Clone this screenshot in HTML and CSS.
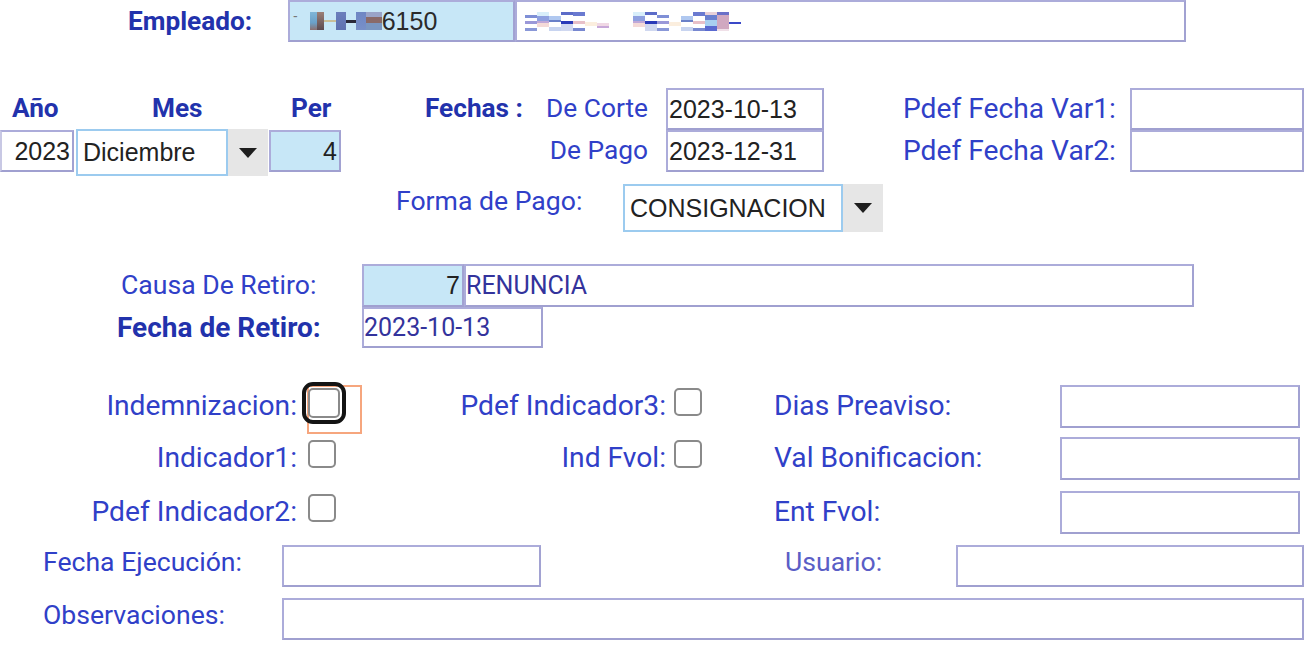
FILE: index.html
```html
<!DOCTYPE html>
<html lang="es">
<head>
<meta charset="utf-8">
<title>Retiro de Empleado</title>
<link rel="stylesheet" href="styles.css">
</head>
<body>
<div class="page">

  <div class="row emp">
    <div class="emp-l"><span class="lbl b">Empleado:</span></div>
    <div class="inp blue emp-code">
      <span class="dash">-</span>
      <span class="rd rd1"></span><span class="rd rd2"></span><span class="rd rd3"></span><span class="rd rd4"></span><span class="rd rd5"></span><span class="rd rd6"></span><span class="rd rd7"></span><span class="code-num">6150</span>
    </div>
    <div class="inp emp-name">
      <span class="nm nm1"></span><span class="nm nm2"></span><span class="nm nm3"></span><span class="nm nm4"></span><span class="nm nm5"></span><span class="nm nm6"></span><span class="nm nm7"></span>
      <span class="nm-gap"></span>
      <span class="nm nm2"></span><span class="nm nm4"></span><span class="nm nm1"></span><span class="nm nm6"></span><span class="nm nm3"></span><span class="nm nm5"></span><span class="nm nm8"></span><span class="nm nm9"></span><span class="nm nm10"></span>
    </div>
  </div>

  <div class="row sec2">
    <div class="blkA">
      <div class="a-labels">
        <div class="a-l1"><span class="lbl b">Año</span></div>
        <div class="a-l2"><span class="lbl b">Mes</span></div>
        <div class="a-l3"><span class="lbl b">Per</span></div>
      </div>
      <div class="a-inputs">
        <div class="inp right anio">2023</div>
        <div class="sel mes">
          <div class="sel-val">Diciembre</div>
          <div class="sel-arr"><svg width="18" height="10" viewBox="0 0 18 10"><polygon points="0,0 18,0 9,10" fill="#1e1e1e"/></svg></div>
        </div>
        <div class="inp blue right per">4</div>
      </div>
    </div>
    <div class="blkB">
      <div class="fechas-l"><span class="lbl b">Fechas :</span></div>
      <div class="b-col">
        <div class="b-row">
          <div class="b-lab"><span class="lbl m">De Corte</span></div>
          <div class="inp date">2023-10-13</div>
        </div>
        <div class="b-row">
          <div class="b-lab"><span class="lbl m">De Pago</span></div>
          <div class="inp date">2023-12-31</div>
        </div>
      </div>
    </div>
    <div class="blkC">
      <div class="c-row">
        <div class="c-lab"><span class="lbl l">Pdef Fecha Var1:</span></div>
        <div class="inp cvar"></div>
      </div>
      <div class="c-row">
        <div class="c-lab"><span class="lbl l">Pdef Fecha Var2:</span></div>
        <div class="inp cvar"></div>
      </div>
    </div>
  </div>

  <div class="row sec3">
    <div class="fp-l"><span class="lbl s">Forma de Pago:</span></div>
    <div class="sel forma">
      <div class="sel-val">CONSIGNACION</div>
      <div class="sel-arr"><svg width="18" height="10" viewBox="0 0 18 10"><polygon points="0,0 18,0 9,10" fill="#1e1e1e"/></svg></div>
    </div>
  </div>

  <div class="row causa">
    <div class="causa-l"><span class="lbl s">Causa De Retiro:</span></div>
    <div class="inp blue right causa-cod">7</div>
    <div class="inp causa-desc rob">RENUNCIA</div>
  </div>
  <div class="row fretiro">
    <div class="fret-l"><span class="lbl b bl2">Fecha de Retiro:</span></div>
    <div class="inp fret-in rob">2023-10-13</div>
  </div>

  <div class="chk-grid">
    <div class="crow crow1">
      <div class="k1"><span class="lbl l">Indemnizacion:</span></div>
      <div class="chk-wrap focus-wrap"><span class="hl"></span><input type="checkbox" class="chk focused"></div>
      <div class="k2"><span class="lbl l">Pdef Indicador3:</span></div>
      <div class="chk-wrap"><input type="checkbox" class="chk"></div>
      <div class="k3"><span class="lbl l">Dias Preaviso:</span></div>
      <div class="inp k3in"></div>
    </div>
    <div class="crow crow2">
      <div class="k1"><span class="lbl l">Indicador1:</span></div>
      <div class="chk-wrap"><input type="checkbox" class="chk"></div>
      <div class="k2"><span class="lbl l">Ind Fvol:</span></div>
      <div class="chk-wrap"><input type="checkbox" class="chk"></div>
      <div class="k3"><span class="lbl l">Val Bonificacion:</span></div>
      <div class="inp k3in"></div>
    </div>
    <div class="crow crow3">
      <div class="k1"><span class="lbl l">Pdef Indicador2:</span></div>
      <div class="chk-wrap"><input type="checkbox" class="chk"></div>
      <div class="k2"></div>
      <div class="chk-wrap"></div>
      <div class="k3"><span class="lbl l">Ent Fvol:</span></div>
      <div class="inp k3in"></div>
    </div>
  </div>

  <div class="row ejec">
    <div class="bl"><span class="lbl s">Fecha Ejecución:</span></div>
    <div class="inp ejec-in"></div>
    <div class="usr-l"><span class="lbl s usr">Usuario:</span></div>
    <div class="inp usr-in"></div>
  </div>
  <div class="row obs">
    <div class="bl"><span class="lbl s">Observaciones:</span></div>
    <div class="inp obs-in"></div>
  </div>

</div>
</body>
</html>
```
FILE: styles.css
```css
* { box-sizing: border-box; }
html, body { margin: 0; padding: 0; }
body {
  width: 1311px;
  height: 649px;
  overflow: hidden;
  background: #ffffff;
  font-family: Roboto, "Liberation Sans", Arial, sans-serif;
}
.page { position: relative; width: 1311px; }

.row { display: flex; }

.lbl {
  font-family: Roboto, "Liberation Sans", sans-serif;
  font-size: 27.5px;
  line-height: 32px;
  color: #3040c8;
  white-space: nowrap;
}
.lbl.s { font-size: 26.6px; }
.lbl.m { font-size: 26.3px; }
.lbl.l { font-size: 28.2px; }
.lbl.b { font-weight: 700; color: #2232ac; font-size: 26.2px; }
.lbl.b.bl2 { font-size: 28px; }
.lbl.usr { color: #5a5ec6; }

.inp {
  height: 42px;
  border: 2px solid #acacda;
  border-bottom-color: #a0a0d0;
  border-right-color: #a2a2d2;
  background: #ffffff;
  display: flex;
  align-items: center;
  padding: 0 2px;
  font-family: "Liberation Sans", Arial, sans-serif;
  font-size: 25px;
  color: #222222;
  white-space: nowrap;
  overflow: hidden;
  flex: none;
}
.inp.blue { background: #c7e7f7; }
.inp.right { justify-content: flex-end; }
.inp.rob {
  font-family: Roboto, sans-serif;
  font-size: 25px;
  color: #33339c;
  padding-left: 0;
}

/* Empleado row */
.emp { height: 42px; }
.emp-l { width: 288px; padding-left: 128px; display: flex; align-items: center; }
.emp-code { width: 227px; padding-left: 3px; }
.emp-name { width: 671px; padding-left: 8px; }
.dash { font-size: 14px; color: #777; align-self: flex-start; margin-top: 6px; margin-right: 12px; }
.rd { display: inline-block; height: 18px; }
.rd1 { width: 7px; background: linear-gradient(#7fb6d8, #6aa0c8 60%, #8b6f6f); }
.rd2 { width: 7px; background: linear-gradient(#9c8078, #5a4a50); }
.rd3 { width: 12px; height: 2px; background: #c9bf9a; align-self: center; }
.rd4 { width: 10px; background: linear-gradient(#6b7ebc, #5e72b0); }
.rd5 { width: 10px; height: 3px; background: #2a2a3a; align-self: center; }
.rd6 { width: 10px; background: linear-gradient(#6e86c4, #7890c8); }
.rd7 { width: 16px; background: linear-gradient(#9aa4c8 0 30%, #8a6a68 30% 60%, #7a96c0 60%); }
.code-num { color: #2a2a2a; }
.nm { display: inline-block; width: 12px; height: 19px; }
.nm1 { background: linear-gradient(#fff 0 15%, #7f8fd6 15% 30%, #fff 30% 50%, #9a98d8 50% 62%, #fff 62% 85%, #8a98d8 85%); }
.nm2 { background: linear-gradient(#d8eefa 0 20%, #8ea0e0 20% 45%, #c0a8d8 45% 60%, #f4dad8 60% 80%, #fff 80%); }
.nm3 { background: linear-gradient(#fff 0 20%, #b0c8f0 20% 40%, #6a80c8 40% 55%, #fff 55% 80%, #c8d4f0 80%); }
.nm4 { background: linear-gradient(#5c6cc8 0 18%, #fff 18% 50%, #2a3ab8 50% 62%, #d0d8f0 62%); }
.nm5 { background: linear-gradient(#6a7ad0 0 20%, #fff 20% 50%, #e8c0c8 50% 65%, #fff 65% 85%, #7888d0 85%); }
.nm6 { background: linear-gradient(#fff 0 55%, #fbeede 55% 75%, #fff 75%); }
.nm7 { background: linear-gradient(#fff 0 60%, #f0d8e4 60% 72%, #c8a8d8 72% 82%, #fff 82%); }
.nm8 { background: linear-gradient(#e8d0d8 0 15%, #6a80d0 15% 40%, #a8d0f0 40% 75%, #5a6ad0 75%); }
.nm9 { background: linear-gradient(#6a70c8 0 18%, #d0a8c0 18% 90%, #f0e0e8 90%); }
.nm10 { background: linear-gradient(#fff 0 55%, #3a48c8 55% 62%, #fff 62%); }
.nm-gap { display: inline-block; width: 24px; }

/* Section 2 */
.sec2 { margin-top: 46px; height: 88px; align-items: flex-start; }
.blkA { width: 341px; display: flex; flex-direction: column; flex: none; }
.a-labels { display: flex; height: 42px; align-items: center; padding-bottom: 3px; }
.a-l1 { width: 76px; padding-left: 12px; }
.a-l2 { width: 193px; padding-left: 76px; }
.a-l3 { width: 72px; padding-left: 22px; }
.a-inputs { display: flex; height: 42px; align-items: flex-start; }
.anio { width: 74px; margin-right: 2px; border-left-color: #c8c8e4; }
.per { width: 72px; margin-left: 1px; }

.sel { display: flex; flex: none; }
.sel-val {
  border: 2px solid #9ccbef;
  background: #fff;
  display: flex;
  align-items: center;
  font-family: "Liberation Sans", Arial, sans-serif;
  font-size: 25px;
  color: #222;
  white-space: nowrap;
}
.sel-arr { background: #e6e6e6; width: 40px; display: flex; align-items: center; justify-content: center; }
.mes { height: 47px; margin-top: -1px; width: 192px; }
.mes .sel-val { width: 152px; padding-left: 5px; }

.blkB { display: flex; flex: none; }
.fechas-l { width: 206px; padding-left: 84px; height: 42px; display: flex; align-items: center; padding-bottom: 3px; }
.b-col { display: flex; flex-direction: column; }
.b-row { display: flex; height: 42px; }
.b-lab { width: 119px; padding-right: 18px; display: flex; align-items: center; justify-content: flex-end; padding-bottom: 3px; }
.date { width: 158px; padding-left: 1px; }

.blkC { margin-left: 79px; display: flex; flex-direction: column; flex: none; }
.c-row { display: flex; height: 42px; }
.c-lab { width: 227px; display: flex; align-items: center; }
.cvar { width: 174px; }

/* Forma de pago */
.sec3 { margin-top: 8px; height: 48px; align-items: flex-start; }
.fp-l { width: 623px; padding-left: 396px; padding-top: 1px; }
.forma { height: 48px; width: 260px; }
.forma .sel-val { width: 220px; padding-left: 5px; }

/* Causa */
.causa { margin-top: 32px; height: 43px; }
.causa-l { width: 362px; padding-left: 121px; display: flex; align-items: center; padding-bottom: 2px; }
.causa-cod { width: 102px; height: 43px; }
.causa-desc { width: 730px; height: 43px; }
.fretiro { height: 41px; }
.fret-l { width: 362px; padding-left: 117px; display: flex; align-items: center; }
.fret-in { width: 181px; height: 41px; }

/* Checkbox grid */
.chk-grid { margin-top: 37px; display: flex; flex-direction: column; }
.crow { display: flex; align-items: flex-start; }
.crow1 { height: 52px; }
.crow2 { height: 54px; }
.crow3 { height: 42px; }
.k1 { width: 297px; text-align: right; padding-top: 5px; flex: none; }
.k2 { width: 330px; text-align: right; padding-top: 5px; flex: none; }
.k3 { width: 286px; margin-left: 72px; padding-top: 5px; flex: none; }
.chk-wrap { width: 28px; margin-left: 11px; margin-top: 3px; height: 28px; position: relative; flex: none; }
.k2 + .chk-wrap { margin-left: 8px; }
.chk {
  appearance: none;
  -webkit-appearance: none;
  display: block;
  width: 28px;
  height: 28px;
  margin: 0;
  border: 2px solid #8a8a8a;
  border-radius: 5px;
  background: #fff;
  position: relative;
}
.chk.focused {
  width: 32px;
  height: 30px;
  outline: 4px solid #141414;
  outline-offset: 2px;
}
.hl {
  position: absolute;
  left: -1px;
  top: -3px;
  width: 55px;
  height: 49px;
  border: 2px solid #f6a67e;
}
.k3in { width: 240px; height: 43px; }

/* Bottom */
.ejec { margin-top: 12px; height: 42px; align-items: flex-start; }
.bl { width: 282px; padding-left: 43px; padding-top: 1px; flex: none; }
.ejec-in { width: 259px; }
.usr-l { width: 415px; padding-left: 244px; padding-top: 1px; flex: none; }
.usr-in { width: 348px; }
.obs { margin-top: 11px; height: 42px; align-items: flex-start; }
.obs-in { width: 1022px; }
```
